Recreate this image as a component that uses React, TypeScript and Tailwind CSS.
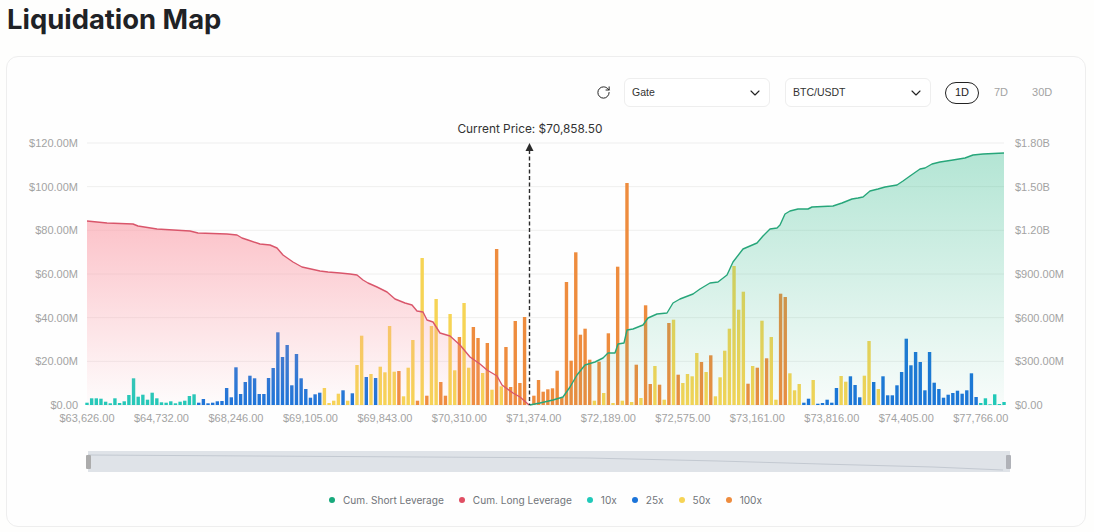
import { ChevronDown, RotateCw } from "lucide-react"

const COLORS = { t: "#20c9b9", b: "#1b74d9", y: "#f6d455", o: "#ee8c3e" }

type Key = keyof typeof COLORS

// bar heights in px, grouped by leverage colour, left to right
const SEGMENTS: [Key, number[]][] = [
  ["t", [2.3, 6.7, 6.7, 6.3, 3.3, 1.7, 6.7, 2, 3.7, 10, 26.7, 8.3, 10.3, 5.3, 12.3, 6.7, 2.7, 2.3, 3.7, 1.7, 3.3, 4.3, 9, 10.7]],
  ["b", [2.3, 6, 1.7, 2.3, 3.7, 4, 17, 7.7, 37.7, 11, 23, 29.3, 26.7, 11, 11, 27, 37, 72.7, 48, 60, 19.7, 51, 26.7, 16, 7.3, 10.7, 12.3]],
  ["y", [17, 2, 4.3, 11.3]],
  ["b", [14.7]],
  ["y", [4.3]],
  ["b", [11.7]],
  ["y", [40, 69.3]],
  ["b", [28]],
  ["y", [31]],
  ["b", [27]],
  ["y", [38.3, 32.7, 79, 33.3]],
  ["o", [34]],
  ["y", [8.7, 37.3, 65]],
  ["o", [4.3]],
  ["y", [147]],
  ["o", [9.3]],
  ["y", [79, 106]],
  ["o", [23, 9.3]],
  ["y", [91, 34.7]],
  ["o", [68]],
  ["y", [102, 37.3]],
  ["o", [78, 67]],
  ["y", [32]],
  ["o", [62]],
  ["y", [15.3]],
  ["o", [156]],
  ["y", [18.7]],
  ["o", [58, 18, 84, 22, 88, 0, 9.3, 25, 13.3, 15.7, 16.7, 34.3, 7.7, 123, 44.3, 152.7, 70.3, 76.3, 45.3]],
  ["y", [4.3]],
  ["o", [43.3]],
  ["y", [12]],
  ["o", [71.7]],
  ["y", [2]],
  ["o", [138.3]],
  ["y", [4.3]],
  ["o", [222]],
  ["y", [3]],
  ["o", [40.3]],
  ["y", [7]],
  ["o", [99.7, 21]],
  ["y", [39]],
  ["o", [20.3]],
  ["y", [5.3]],
  ["o", [82]],
  ["y", [85.3]],
  ["o", [30.3]],
  ["y", [22, 31, 28.7, 52]],
  ["o", [43]],
  ["y", [33]],
  ["o", [49.7]],
  ["y", [8.7, 27.7, 54.3, 76.3, 139, 95.3, 113.3]],
  ["o", [21.3]],
  ["y", [39]],
  ["o", [37.3]],
  ["y", [84.3]],
  ["o", [46.7]],
  ["y", [68, 5.3]],
  ["o", [111.3, 108]],
  ["y", [31.7, 14.7, 21]],
  ["b", [2.3, 6.3]],
  ["y", [25]],
  ["b", [1.3, 2, 5.3, 2.3, 17]],
  ["y", [29, 23.3]],
  ["b", [28.7, 20, 7.7]],
  ["y", [29.3, 64]],
  ["b", [23]],
  ["y", [16]],
  ["b", [28.7, 9.7, 9.7, 19.7, 33, 66.3, 39.7, 53, 43, 14.7, 53, 22.3, 16, 7.3, 10.3, 12, 14.3, 11.3, 14.7, 31.7, 8]],
  ["t", [2, 6.7, 0.7, 10.7, 1, 3]],
]

const BARS = SEGMENTS.flatMap(([c, hs]) => hs.map((h) => ({ c, h })))

const LONG_LINE = "87,221 107,223 133,224 138,226 157,229 190,231 198,233 227,234 237,235 242,238 248,240 260,244 270,245 277,248 283,255 293,262 302,267 320,271 328,272 340,273 350,274 357,275 363,280 368,283 377,287 387,292 395,299 405,303 412,305 417,311 423,312 427,320 433,322 440,333 450,336 460,345 470,357 480,364 487,370 497,376 502,385 513,393 520,397 529,405"
const SHORT_LINE = "529.5,405 540,403 553,400 563,397 570,387 577,375 585,365 595,362 603,358 608,353 615,353 618,344 624,343 627,330 633,329 643,325 648,318 657,314 667,313 673,303 680,299 693,294 700,289 710,283 718,282 727,275 733,262 743,249 757,243 763,236 770,229 777,228 780,225 785,214 790,211 798,209 808,209 812,207 833,206 842,203 852,199 858,198 863,197 870,191 878,189 885,187 897,185 903,181 910,176 920,169 925,168 932,164 940,162 953,160 965,158 973,155 983,154 1004,153"

const LEFT_TICKS = ["$0.00", "$20.00M", "$40.00M", "$60.00M", "$80.00M", "$100.00M", "$120.00M"]
const RIGHT_TICKS = ["$0.00", "$300.00M", "$600.00M", "$900.00M", "$1.20B", "$1.50B", "$1.80B"]
const X_TICKS = ["$63,626.00", "$64,732.00", "$68,246.00", "$69,105.00", "$69,843.00", "$70,310.00", "$71,374.00", "$72,189.00", "$72,575.00", "$73,161.00", "$73,816.00", "$74,405.00", "$77,766.00"]

const LEGEND = [
  { label: "Cum. Short Leverage", dot: "bg-[#17a97c]" },
  { label: "Cum. Long Leverage", dot: "bg-[#e04f63]" },
  { label: "10x", dot: "bg-[#20c9b9]" },
  { label: "25x", dot: "bg-[#1b74d9]" },
  { label: "50x", dot: "bg-[#f6d455]" },
  { label: "100x", dot: "bg-[#ee8c3e]" },
]

const AXIS_FONT = "'Liberation Sans', sans-serif"

function Chart() {
  return (
    <svg width={1078} height={330} viewBox="7 107 1078 330" className="block">
      <defs>
        <linearGradient id="longFill" x1="0" y1="0" x2="0" y2="1">
          <stop offset="0" stopColor="#fa9aa5" stopOpacity="0.6" />
          <stop offset="1" stopColor="#fa9aa5" stopOpacity="0.02" />
        </linearGradient>
        <linearGradient id="shortFill" x1="0" y1="0" x2="0" y2="1">
          <stop offset="0" stopColor="#2fb98a" stopOpacity="0.36" />
          <stop offset="1" stopColor="#2fb98a" stopOpacity="0.03" />
        </linearGradient>
      </defs>

      {LEFT_TICKS.map((t, i) => {
        const y = 405 - i * 43.67
        return (
          <g key={t} fontFamily={AXIS_FONT} fontSize={11} fill="#a3a3a3">
            <line x1={87} x2={1004} y1={y} y2={y} stroke="#efefee" />
            <text x={78} y={y + 4} textAnchor="end">{t}</text>
            <text x={1015} y={y + 4}>{RIGHT_TICKS[i]}</text>
          </g>
        )
      })}

      {BARS.map((b, i) => (
        <rect key={i} x={87 + i * 4.655 - 1.7} y={405 - b.h} width={3.4} height={b.h} fill={COLORS[b.c]} />
      ))}

      <polygon points={`${LONG_LINE} 87,405`} fill="url(#longFill)" />
      <polygon points={`${SHORT_LINE} 1004,405`} fill="url(#shortFill)" />
      <polyline points={LONG_LINE} fill="none" stroke="#d9566b" strokeWidth={1.4} strokeLinejoin="round" />
      <polyline points={SHORT_LINE} fill="none" stroke="#27a67a" strokeWidth={1.4} strokeLinejoin="round" />

      <line x1={529.5} x2={529.5} y1={150} y2={405} stroke="#2b2b2b" strokeWidth={1.4} strokeDasharray="4 2.5" />
      <polygon points="529.5,143 525.5,151 533.5,151" fill="#2b2b2b" />
      <text x={530} y={132.5} textAnchor="middle" fontFamily="Inter, sans-serif" fontSize={11.85} fill="#333">
        Current Price: $70,858.50
      </text>

      {X_TICKS.map((t, i) => (
        <text key={t} x={87 + i * 74.48} y={422} textAnchor="middle" fontFamily={AXIS_FONT} fontSize={11} fill="#a3a3a3">
          {t}
        </text>
      ))}
    </svg>
  )
}

function Select({ value }: { value: string }) {
  return (
    <div className="flex h-[29px] w-[146px] items-center justify-between rounded-md border border-[#eeeeee] bg-white pl-[7px] pr-[6px] text-[10.5px] text-[#333]">
      <span>{value}</span>
      <ChevronDown size={16} strokeWidth={1.7} className="text-[#222]" />
    </div>
  )
}

export default function App() {
  return (
    <div className="h-[532px] w-[1094px] overflow-hidden bg-[#fefefd] px-[6px] font-['Liberation_Sans',sans-serif]">
      <h1 className="h-[56px] pl-px pt-[1px] font-['Inter',sans-serif] text-[27.4px] leading-[36px] font-bold text-[#1f2226]">
        Liquidation Map
      </h1>

      <div className="h-[471px] w-[1080px] rounded-xl border border-[#eeeeee] bg-[#fefefe] pt-[21px]">
        {/* Controls */}
        <div className="flex h-[29px] items-center pl-[589px]">
          <RotateCw size={15} strokeWidth={1.6} className="text-[#222]" />
          <div className="ml-[13px]"><Select value="Gate" /></div>
          <div className="ml-[15px]"><Select value="BTC/USDT" /></div>
          <div className="ml-[14px] flex items-center text-[11px] text-[#a3a3a3]">
            <span className="flex h-[22px] w-[34px] items-center justify-center rounded-full border border-[#222] text-[#222]">1D</span>
            <span className="ml-[15px]">7D</span>
            <span className="ml-[24px]">30D</span>
          </div>
        </div>

        <Chart />

        {/* Zoom slider */}
        <div className="relative mt-[14px] ml-[81px] h-[21px] w-[922px] bg-[#dfe3e8]">
          <svg width={922} height={21} className="absolute inset-0">
            <polyline points="0,4 500,7 630,10 733,13 845,16 915,19" fill="none" stroke="#c3c9d1" strokeWidth={1} />
          </svg>
          <span className="absolute -left-[2px] top-[4px] h-[14px] w-[5px] rounded-[1px] bg-[#acacac]" />
          <span className="absolute -right-[1px] top-[4px] h-[14px] w-[5px] rounded-[1px] bg-[#b0b2b8]" />
        </div>

        {/* Legend */}
        <div className="mt-[21px] flex items-center gap-[15px] pl-[322px] font-['Inter',sans-serif] text-[10.1px] leading-[14px] text-[#71757a]">
          {LEGEND.map((l) => (
            <div key={l.label} className="flex items-center gap-[8px]">
              <span className={`h-[6px] w-[6px] rounded-full ${l.dot}`} />
              <span>{l.label}</span>
            </div>
          ))}
        </div>
      </div>
    </div>
  )
}
